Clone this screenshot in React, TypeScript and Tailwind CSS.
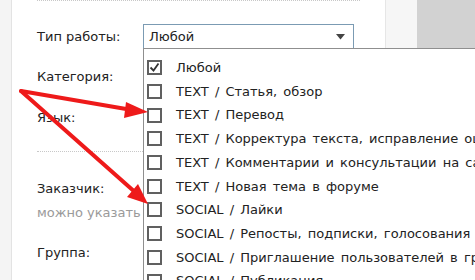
import React from "react";

const items = [
  { label: "Любой", checked: true },
  { label: "TEXT / Статья, обзор" },
  { label: "TEXT / Перевод" },
  { label: "TEXT / Корректура текста, исправление ошибок" },
  { label: "TEXT / Комментарии и консультации на сайтах" },
  { label: "TEXT / Новая тема в форуме" },
  { label: "SOCIAL / Лайки" },
  { label: "SOCIAL / Репосты, подписки, голосования" },
  { label: "SOCIAL / Приглашение пользователей в группу" },
  { label: "SOCIAL / Публикация" },
];

function Box({ checked }: { checked?: boolean }) {
  return (
    <span className="flex h-[15px] w-[15px] shrink-0 items-center justify-center border-2 border-[#606060] bg-white">
      {checked && (
        <svg width="11" height="11" viewBox="0 0 11 11">
          <path d="M1.5 5.5 L4.5 8.5 L9.5 1.5" fill="none" stroke="#333" strokeWidth="1.8" />
        </svg>
      )}
    </span>
  );
}

export default function App() {
  return (
    <div
      className="relative h-[280px] w-[475px] overflow-hidden bg-white text-[13px] text-[#222]"
      style={{ fontFamily: '"DejaVu Sans", Verdana, sans-serif' }}
    >
      <div className="flex h-full">
        {/* left gutter */}
        <div className="h-full w-[12px] shrink-0 border-r border-[#e3e3e3] bg-[#f4f4f4]" />

        {/* form */}
        <div className="w-[373px] shrink-0 pl-[25px]">
          <div className="w-[323px] border-t border-dotted border-[#c8c8c8]" />
          <div className="mt-[23px] flex items-center">
            <span className="w-[106px]">Тип работы:</span>
            <div className="flex h-[25px] w-[211px] items-center justify-between border border-[#7b9bb3] px-[5px]">
              <span>Любой</span>
              <svg width="9" height="6" viewBox="0 0 9 6" className="mr-[3px]">
                <path d="M0 0 H9 L4.5 5.5 Z" fill="#444" />
              </svg>
            </div>
          </div>
          <div className="mt-[17px] leading-[22px]">Категория:</div>
          <div className="mt-[19px] leading-[22px]">Язык:</div>
          <div className="mt-[22px] w-[120px] border-t border-dotted border-[#c8c8c8]" />
          <div className="mt-[26px] leading-[22px]">Заказчик:</div>
          <div className="mt-[3px] whitespace-nowrap leading-[20px] text-[#9a9a9a]">можно указать несколько</div>
          <div className="mt-[19px] leading-[22px]">Группа:</div>
        </div>

        {/* right side */}
        <div className="h-[48px] w-[32px] shrink-0 border-l border-[#e6e6e6] bg-[#f6f6f6]" />
        <div className="h-[48px] flex-1 bg-[#d2d2d2]" />
      </div>

      {/* open dropdown list */}
      <div className="absolute left-[143px] top-[48px] w-[360px] border-l border-t border-[#8f8f8f] bg-white pt-[7px]">
        {items.map((it) => (
          <div key={it.label} className="flex h-[23.7px] items-center whitespace-nowrap pl-[3px]">
            <Box checked={it.checked} />
            <span className="ml-[14px] [word-spacing:2px]">{it.label}</span>
          </div>
        ))}
      </div>

      {/* red annotation arrows */}
      <svg className="pointer-events-none absolute left-0 top-0" width="475" height="280">
        <g stroke="#ee1a1a" strokeWidth="4" strokeLinecap="round">
          <line x1="21" y1="91" x2="132" y2="110" />
          <line x1="21" y1="91" x2="136" y2="193" />
        </g>
        <g fill="#ee1a1a">
          <polygon points="148,112 126,102 124,118" />
          <polygon points="148,204 127,197 138,184" />
        </g>
      </svg>
    </div>
  );
}
